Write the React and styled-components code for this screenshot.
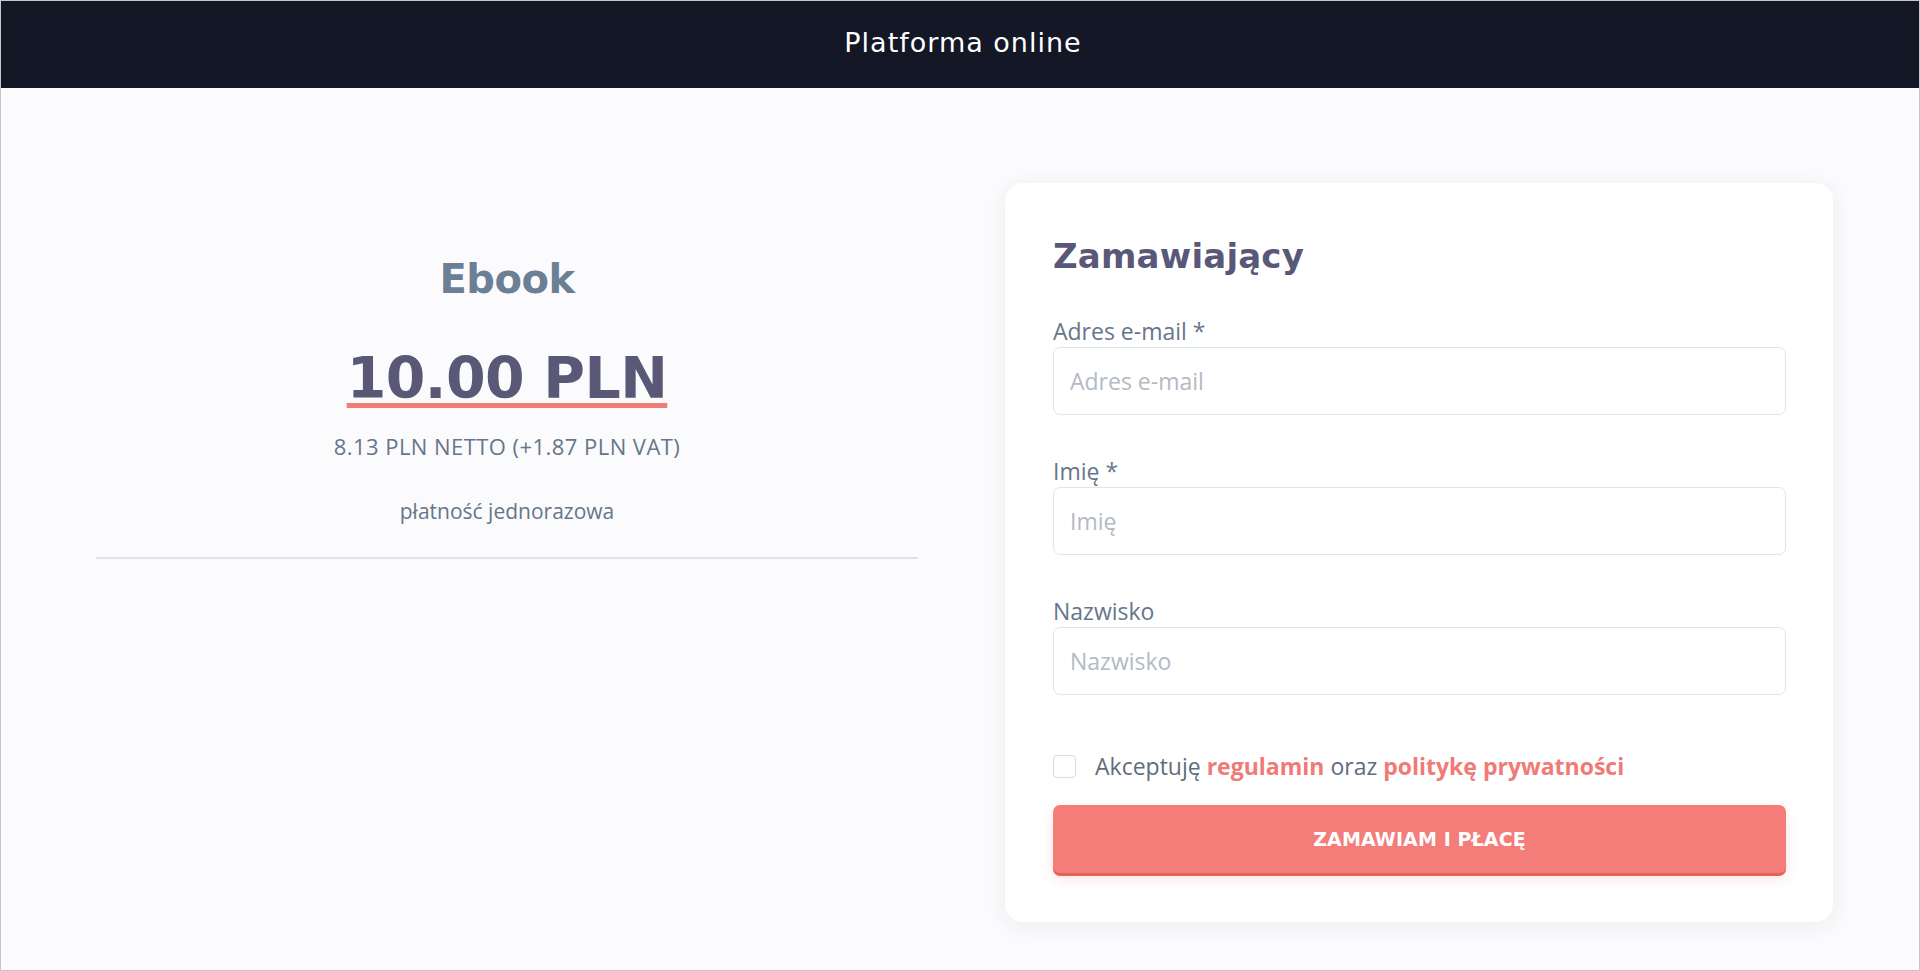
import styled, { createGlobalStyle } from 'styled-components'

const GlobalStyle = createGlobalStyle`
	* {
		box-sizing: border-box;
	}
	body {
		margin: 0;
		background: #fbfbfd;
		font-family: 'Open Sans', 'Liberation Sans', sans-serif;
	}
`

const Frame = styled.div`
	height: 971px;
	border: 1px solid #c6c6cb;
	background: #fbfbfd;
	display: flex;
	flex-direction: column;
`

const TopBar = styled.header`
	height: 87px;
	background: #141726;
	display: flex;
	align-items: center;
	justify-content: center;
	color: #ffffff;
	font-family: 'DejaVu Sans', sans-serif;
	font-size: 27px;
	letter-spacing: 1px;
	padding: 0 0 4px 6px;
`

const Main = styled.main`
	display: flex;
	align-items: flex-start;
	gap: 87px;
	padding: 95px 86px 0 95px;
`

const Summary = styled.section`
	width: 822px;
	display: flex;
	flex-direction: column;
	align-items: center;
	padding-top: 72px;
`

const ProductName = styled.h2`
	margin: 0;
	font-family: 'DejaVu Sans', sans-serif;
	font-weight: 700;
	font-size: 40px;
	line-height: 48px;
	color: #6b7f95;
	letter-spacing: -0.5px;
`

const Price = styled.div`
	margin-top: 43px;
	font-family: 'DejaVu Sans', sans-serif;
	font-weight: 700;
	font-size: 57px;
	line-height: 64px;
	color: #595877;
	letter-spacing: -0.6px;
	text-decoration: underline;
	text-decoration-color: #f27d78;
	text-decoration-thickness: 5px;
	text-underline-offset: 5px;
	text-decoration-skip-ink: none;
`

const Net = styled.p`
	margin: 21px 0 0;
	font-size: 22px;
	letter-spacing: 0.45px;
	color: #66768a;
`

const Billing = styled.p`
	margin: 36px 0 0;
	font-size: 21px;
	color: #66768a;
`

const Divider = styled.hr`
	align-self: stretch;
	margin: 32px 0 0;
	border: 0;
	border-top: 2px solid #dfe3e8;
`

const Card = styled.section`
	width: 828px;
	background: #ffffff;
	border-radius: 18px;
	box-shadow: 0 4px 22px rgba(40, 40, 70, 0.07);
	padding: 52px 47px 49px 48px;
	display: flex;
	flex-direction: column;
`

const CardTitle = styled.h1`
	margin: 0 0 40px;
	font-family: 'DejaVu Sans', sans-serif;
	font-weight: 700;
	font-size: 34px;
	line-height: 42px;
	color: #5a5878;
	letter-spacing: 0.2px;
`

const Field = styled.label`
	display: flex;
	flex-direction: column;
	margin-bottom: ${(p) => p.$gap || 42}px;
`

const FieldLabel = styled.span`
	font-size: 23px;
	line-height: 28px;
	color: #66768a;
	margin-bottom: 2px;
`

const Input = styled.input`
	height: 68px;
	border: 1.5px solid #dce7e6;
	border-radius: 7px;
	padding: 0 16px;
	font-family: 'Open Sans', 'Liberation Sans', sans-serif;
	font-size: 23px;
	color: #4a5563;
	background: #ffffff;
	outline: none;
	&::placeholder {
		color: #b3bac3;
	}
`

const Consent = styled.label`
	display: flex;
	align-items: center;
	gap: 19px;
	font-size: 23px;
	color: #5f6d7e;
	margin-top: 13px;
`

const Box = styled.span`
	width: 23px;
	height: 23px;
	border: 1.5px solid #d3dedd;
	border-radius: 4px;
	background: #ffffff;
	flex-shrink: 0;
`

const TermsLink = styled.a`
	color: #f07a76;
	font-weight: 700;
	text-decoration: none;
`

const SubmitButton = styled.button`
	margin-top: 23px;
	height: 68px;
	border: 0;
	border-radius: 7px;
	background: #f57d79;
	box-shadow: 0 3px 0 #e4625e, 0 6px 14px rgba(230, 100, 95, 0.18);
	color: #ffffff;
	font-family: 'DejaVu Sans', sans-serif;
	font-weight: 700;
	font-size: 19px;
	letter-spacing: 0.1px;
	cursor: pointer;
`

function App() {
	return (
		<>
			<GlobalStyle />
			<Frame>
				<TopBar>Platforma online</TopBar>
				<Main>
					<Summary>
						<ProductName>Ebook</ProductName>
						<Price>10.00 PLN</Price>
						<Net>8.13 PLN NETTO (+1.87 PLN VAT)</Net>
						<Billing>płatność jednorazowa</Billing>
						<Divider />
					</Summary>
					<Card>
						<CardTitle>Zamawiający</CardTitle>
						<Field>
							<FieldLabel>Adres e-mail *</FieldLabel>
							<Input placeholder="Adres e-mail" />
						</Field>
						<Field>
							<FieldLabel>Imię *</FieldLabel>
							<Input placeholder="Imię" />
						</Field>
						<Field>
							<FieldLabel>Nazwisko</FieldLabel>
							<Input placeholder="Nazwisko" />
						</Field>
						<Consent>
							<Box />
							<span>
								Akceptuję <TermsLink href="#">regulamin</TermsLink> oraz{' '}
								<TermsLink href="#">politykę prywatności</TermsLink>
							</span>
						</Consent>
						<SubmitButton>ZAMAWIAM I PŁACĘ</SubmitButton>
					</Card>
				</Main>
			</Frame>
		</>
	)
}

export default App
